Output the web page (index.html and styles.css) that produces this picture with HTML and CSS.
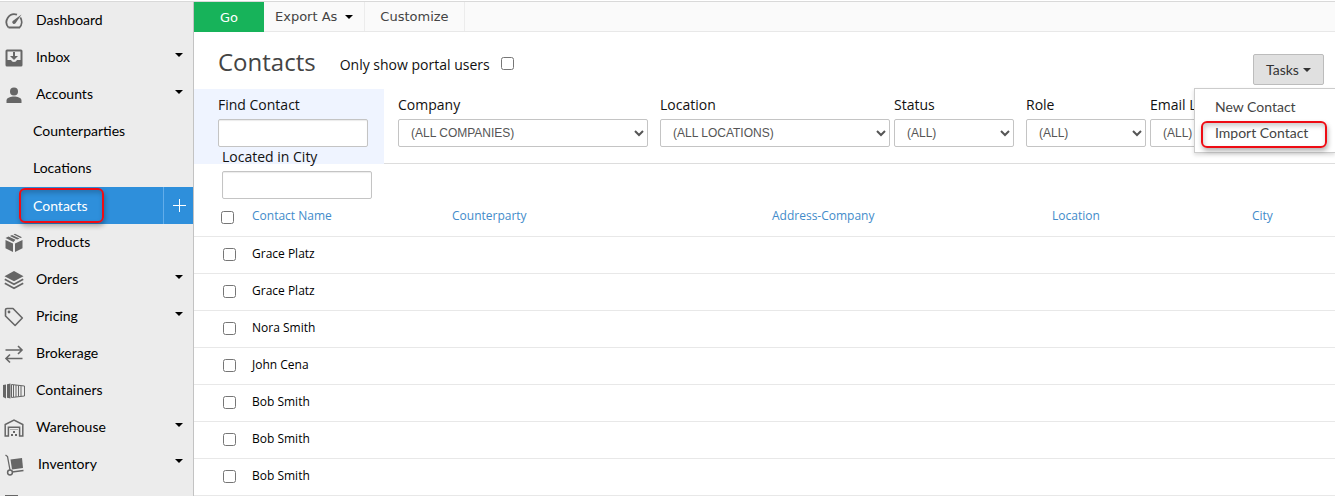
FILE: index.html
```
<!DOCTYPE html>
<html lang="en">
<head>
  <meta charset="UTF-8">
  <title>Contacts</title>
  <link rel="stylesheet" href="styles.css">
</head>
<body>

<div class="layout">
  <nav class="sidebar">
    <a class="nav-item" href="#">
      <svg class="icon" viewBox="0 0 20 20"><path d="M4.5 16.5A8 8 0 0 1 13 3.6M16.3 6.6a8 8 0 0 1-.8 9.9H4.5" fill="none" stroke="#666" stroke-width="1.8"/><path d="M17.5 3.5l-6 8.8a1.8 1.8 0 1 1-2.8-2.4z" fill="#666"/></svg>
      Dashboard
    </a>
    <a class="nav-item" href="#">
      <svg class="icon" viewBox="0 0 20 20"><path fill="#666" fill-rule="evenodd" d="M3 1.500h14a1.500 1.500 0 0 1 1.500 1.500v14a1.500 1.500 0 0 1-1.500 1.500H3A1.500 1.500 0 0 1 1.500 17V3A1.500 1.500 0 0 1 3 1.500zM3.500 3.500v8.500h3.500a3.200 3.200 0 0 0 6 0h3.500V3.500z"/><path fill="#666" d="M9 4h2v4h3l-4 4-4-4h3z"/></svg>
      Inbox
      <span class="caret"></span>
    </a>
    <a class="nav-item" href="#">
      <svg class="icon" viewBox="0 0 20 20"><circle cx="10" cy="6.500" r="4" fill="#666"/><path fill="#666" d="M2.500 18v-2.500c0-3 4.500-4 7.500-4s7.500 1 7.500 4V18z"/></svg>
      Accounts
      <span class="caret"></span>
    </a>
    <a class="nav-item sub" href="#">Counterparties</a>
    <a class="nav-item sub" href="#">Locations</a>
    <div class="nav-active">
      <a class="marked" href="#">Contacts</a>
      <button class="add" aria-label="Add contact"><svg width="14" height="14" viewBox="0 0 14 14"><path d="M7.500 0v13M1 6.500h13" stroke="#fff"/></svg></button>
    </div>
    <a class="nav-item" href="#">
      <svg class="icon" viewBox="0 0 20 20"><path fill="#666" d="M1.500 7l7.500 3.600V19l-7.500-3.800zM18.500 7L11 10.600V19l7.500-3.800zM1.500 5l3-1.500 7 3.300L9.500 9zM6 3l2-1 7.500 3.400-2.300 1.200zM9.500 1.400L11 .8l7 3.500-1.500.8z"/></svg>
      Products
    </a>
    <a class="nav-item" href="#">
      <svg class="icon" viewBox="0 0 20 20"><path fill="#666" d="M10 1l9.500 5.200L10 11.200.500 6.200z"/><path d="M.8 9.300l9.200 5 9.200-5M.8 13.200l9.200 5 9.200-5" fill="none" stroke="#666" stroke-width="1.700"/></svg>
      Orders
      <span class="caret"></span>
    </a>
    <a class="nav-item" href="#">
      <svg class="icon" viewBox="0 0 20 20"><path d="M1.500 3a1.500 1.500 0 0 1 1.500-1.500h6L18.300 11l-7.200 7.500L1.500 9z" fill="none" stroke="#666" stroke-width="1.600" stroke-linejoin="round"/><circle cx="5" cy="5" r="1.400" fill="#666"/></svg>
      Pricing
      <span class="caret"></span>
    </a>
    <a class="nav-item" href="#">
      <svg class="icon" viewBox="0 0 20 20"><path d="M1.500 6H18M14 2l4 4-4 4M18.500 14.500H2M6 10.500l-4 4 4 4" fill="none" stroke="#666" stroke-width="1.600"/></svg>
      Brokerage
    </a>
    <a class="nav-item" href="#">
      <svg class="icon wide" viewBox="0 0 24 16"><path fill="#666" d="M1 2l3-.5v14L1 14zM5 1.200l3.500-.7v15L5 14.800z"/><path d="M9.500 1.500L22.500 3v10l-13 1.500zM11.500 2v12M14 2v12M16.500 2.500v11M19 3v10.500" fill="none" stroke="#666" stroke-width="1"/></svg>
      Containers
    </a>
    <a class="nav-item" href="#">
      <svg class="icon" viewBox="0 0 20 20"><path d="M1.200 18V6.500L10 2l8.800 4.500V18h-3.200V9.200H4.400V18z" fill="none" stroke="#666" stroke-width="1.500"/><path d="M6 11.500h8" stroke="#aaa" stroke-width="1"/><path fill="#666" d="M9 13h2v2H9zM7 16h2v2H7zM11 16h2v2h-2z"/></svg>
      Warehouse
      <span class="caret"></span>
    </a>
    <a class="nav-item inventory" href="#">
      <svg class="icon tall" viewBox="0 0 20 22"><path d="M1.500 1l2 1.500L6 16M8 18l11.500-1.500" fill="none" stroke="#666" stroke-width="1.300"/><path fill="#666" d="M6.500 5.500L18 4l1 10-11 1.500z"/><circle cx="6" cy="18.500" r="2.400" fill="#ececec" stroke="#666" stroke-width="1.500"/></svg>
      Inventory
      <span class="caret"></span>
    </a>
    <div class="nav-item last">
      <svg class="icon" viewBox="0 0 20 20"><path fill="#666" d="M1 1h13v16H1z"/></svg>
    </div>
  </nav>

  <main class="main">
    <div class="toolbar">
      <button class="go">Go</button>
      <button class="tool">Export As <span class="caret"></span></button>
      <button class="tool">Customize</button>
    </div>

    <header class="page-head">
      <h1>Contacts</h1>
      <label class="portal" for="portalUsers">Only show portal users</label>
      <input type="checkbox" id="portalUsers">
      <div class="tasks">
        <button class="tasks-button">Tasks <span class="caret"></span></button>
        <div class="tasks-menu">
          <a href="#">New Contact</a>
          <a class="marked" href="#">Import Contact</a>
        </div>
      </div>
    </header>

    <div class="filters">
      <div class="field find">
        <label for="findContact">Find Contact</label>
        <input type="text" id="findContact">
      </div>
      <div class="filter-group">
        <div class="field company">
          <label for="company">Company</label>
          <select id="company"><option>(ALL COMPANIES)</option></select>
        </div>
      </div>
      <div class="filter-group">
        <div class="field location">
          <label for="location">Location</label>
          <select id="location"><option>(ALL LOCATIONS)</option></select>
        </div>
        <div class="field">
          <label for="status">Status</label>
          <select id="status"><option>(ALL)</option></select>
        </div>
      </div>
      <div class="filter-group">
        <div class="field">
          <label for="role">Role</label>
          <select id="role"><option>(ALL)</option></select>
        </div>
        <div class="field">
          <label for="email">Email L</label>
          <select id="email"><option>(ALL)</option></select>
        </div>
      </div>
    </div>
    <div class="field city">
      <label for="city">Located in City</label>
      <input type="text" id="city">
    </div>

    <table class="contacts">
      <colgroup>
        <col class="col-check"><col class="col-name"><col class="col-party"><col class="col-address"><col class="col-location"><col>
      </colgroup>
      <thead>
        <tr>
          <th><input type="checkbox" aria-label="Select all"></th>
          <th><a href="#">Contact Name</a></th>
          <th><a href="#">Counterparty</a></th>
          <th><a href="#">Address-Company</a></th>
          <th><a href="#">Location</a></th>
          <th><a href="#">City</a></th>
        </tr>
      </thead>
      <tbody>
        <tr><td><input type="checkbox" id="c1"></td><td colspan="5"><label for="c1">Grace Platz</label></td></tr>
        <tr><td><input type="checkbox" id="c2"></td><td colspan="5"><label for="c2">Grace Platz</label></td></tr>
        <tr><td><input type="checkbox" id="c3"></td><td colspan="5"><label for="c3">Nora Smith</label></td></tr>
        <tr><td><input type="checkbox" id="c4"></td><td colspan="5"><label for="c4">John Cena</label></td></tr>
        <tr><td><input type="checkbox" id="c5"></td><td colspan="5"><label for="c5">Bob Smith</label></td></tr>
        <tr><td><input type="checkbox" id="c6"></td><td colspan="5"><label for="c6">Bob Smith</label></td></tr>
        <tr><td><input type="checkbox" id="c7"></td><td colspan="5"><label for="c7">Bob Smith</label></td></tr>
      </tbody>
    </table>
  </main>
</div>

</body>
</html>
```
FILE: styles.css
```
* {
  box-sizing: border-box;
}
body {
  margin: 0;
  height: 100vh;
  overflow: hidden;
  padding-top: 1px;
  background: #fff;
  color: #111;
  font-family: "Open Sans", "Noto Sans", sans-serif;
  font-size: 14px;
}
a {
  text-decoration: none;
}
button {
  font: inherit;
  border: none;
  cursor: pointer;
}
.layout {
  display: flex;
  height: 100%;
  border-top: 1px solid #d9d9d9;
}
.caret {
  border-left: 4px solid transparent;
  border-right: 4px solid transparent;
  border-top: 4px solid #000;
}

/* sidebar */
.sidebar {
  flex: 0 0 194px;
  background: #ececec;
  border-right: 1px solid #c3c3c3;
  font-family: Lato, sans-serif;
}
.nav-item {
  display: flex;
  align-items: center;
  height: 37px;
  padding: 0 10px 2px 4px;
  gap: 12px;
  color: #000;
}
.nav-item .caret {
  margin: 0 0 4px auto;
}
.nav-item.sub {
  padding-left: 33px;
}
.icon {
  width: 20px;
  height: 20px;
  flex: none;
  margin: 2px 0 0;
}
.icon.wide {
  width: 24px;
  margin: 2px -2px 0;
}
.icon.tall {
  height: 22px;
}
.nav-item.inventory {
  gap: 14px;
}
.nav-item.inventory .caret {
  margin-bottom: 6px;
}
.nav-item.last {
  padding-top: 4px;
}
.nav-active {
  display: flex;
  align-items: center;
  height: 37px;
  padding-left: 19px;
  background: #2e8fdb;
}
.marked {
  border: 2px solid #ee0c14;
  border-radius: 6px;
  box-shadow: 1px 3px 5px rgba(0,0,0,0.3), inset 1px 3px 5px rgba(0,0,0,0.2);
}
.nav-active .marked {
  width: 85px;
  height: 35px;
  padding-left: 12px;
  line-height: 31px;
  color: #fff;
}
.add {
  display: flex;
  align-items: center;
  justify-content: center;
  width: 30px;
  height: 37px;
  margin-left: auto;
  padding: 0;
  background: none;
  border-left: 1px solid #62adea;
}

/* main column */
.main {
  flex: 1;
  min-width: 0;
}
.toolbar {
  display: flex;
  height: 30px;
  background: #fafafa;
  border-bottom: 1px solid #e8e8e8;
  font-family: "DejaVu Sans", sans-serif;
  font-size: 13px;
}
.go {
  width: 70px;
  height: 30px;
  background: #17b35a;
  color: #fff;
}
.tool {
  display: flex;
  align-items: center;
  gap: 8px;
  padding: 0 11px;
  background: none;
  border-right: 1px solid #ececec;
  color: #444;
}
.tool + .tool {
  padding: 0 15px;
}
.page-head {
  display: flex;
  align-items: center;
  height: 57px;
  padding: 8px 11px 0 24px;
}
h1 {
  margin: 0 24px 6px 0;
  font-size: 24px;
  font-weight: normal;
  color: #444;
}
input[type="checkbox"] {
  width: 13px;
  height: 13px;
  margin: 0;
  vertical-align: middle;
}
.page-head input {
  margin-bottom: 2px;
}
.portal {
  margin-right: 11px;
}
.tasks {
  position: relative;
  align-self: flex-end;
  margin: 0 0 4px auto;
  font-family: Lato, sans-serif;
}
.tasks-button {
  display: flex;
  align-items: center;
  justify-content: center;
  gap: 4px;
  width: 71px;
  height: 31px;
  padding: 0;
  background: #e0e0e0;
  border: 1px solid #bcbcbc;
  border-radius: 2px;
  color: #333;
}
.tasks-button .caret {
  border-top-color: #333;
}
.tasks-menu {
  position: absolute;
  z-index: 10;
  top: 34px;
  right: -11px;
  width: 141px;
  padding: 5px 8px 4px 6px;
  background: #fff;
  border: 1px solid #ccc;
  border-right: none;
  box-shadow: 0 2px 4px rgba(0,0,0,0.15);
}
.tasks-menu a {
  display: block;
  height: 27px;
  padding-left: 14px;
  line-height: 25px;
  color: #444;
}
.tasks-menu .marked {
  padding-left: 12px;
  line-height: 20px;
}

/* filters */
.filters {
  display: flex;
  height: 75px;
  border-bottom: 1px solid #ddd;
}
.field {
  display: flex;
  flex-direction: column;
  flex: none;
  width: 120px;
}
.field label {
  height: 22px;
  line-height: 16px;
}
.field input,
.field select {
  width: 100%;
  height: 28px;
  border: 1px solid #c4c4c4;
  border-radius: 2px;
  background: #fff;
}
.field input {
  width: 150px;
  box-shadow: inset 0 1px 1px rgba(0,0,0,0.08);
}
.field select {
  padding: 0 0 0 8px;
  color: #555;
  font-family: "Liberation Sans", Arial, sans-serif;
  font-size: 12px;
}
.field.find {
  width: 190px;
  height: 75px;
  margin-right: 14px;
  padding: 8px 0 0 24px;
  background: #eff4ff;
}
.filter-group {
  display: flex;
  gap: 4px;
  padding-top: 8px;
  margin-right: 12px;
}
.field.company {
  width: 250px;
}
.field.location {
  width: 230px;
}
.field.city {
  margin: -15px 0 0 28px;
}

/* contact list */
.contacts {
  width: 100%;
  table-layout: fixed;
  border-collapse: collapse;
  font-size: 12px;
}
.col-check {
  width: 58px;
}
.col-name,
.col-location {
  width: 200px;
}
.col-party {
  width: 320px;
}
.col-address {
  width: 280px;
}
.contacts th,
.contacts td {
  height: 37px;
  padding: 0 0 3px;
  border-bottom: 1px solid #e8e8e8;
  text-align: left;
  font-weight: normal;
}
.contacts td {
  color: #000;
}
.contacts th a {
  color: #428bca;
}
.contacts th:first-child {
  padding-left: 27px;
}
.contacts td:first-child {
  padding-left: 29px;
}
```
